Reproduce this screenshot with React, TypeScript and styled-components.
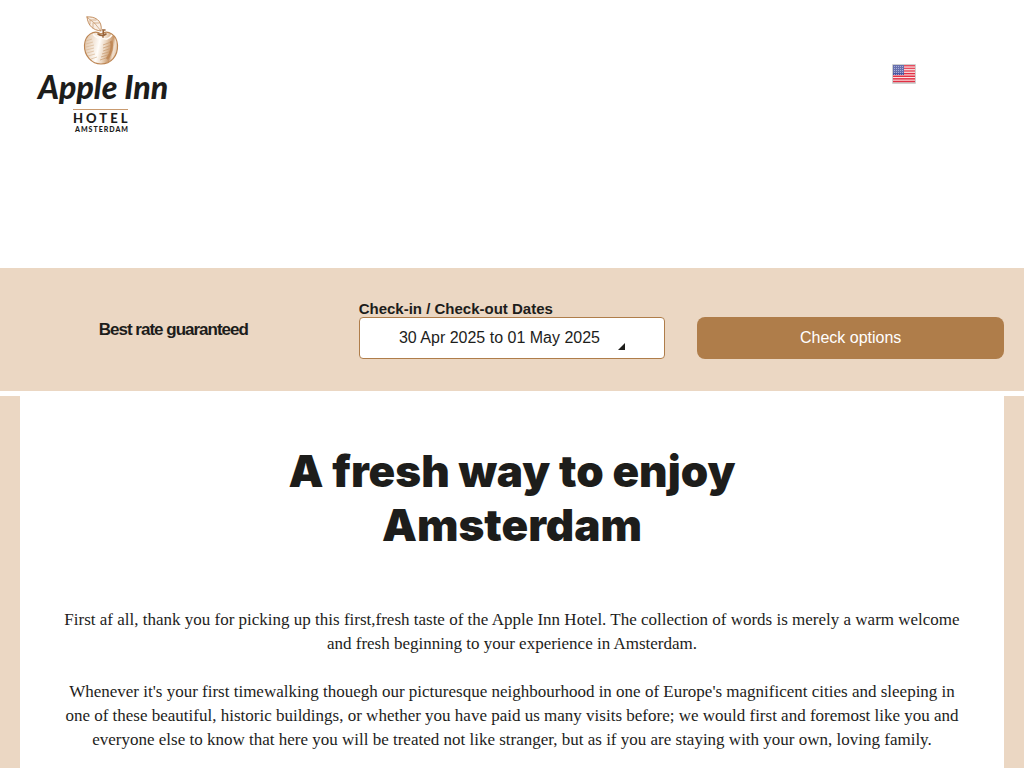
import React from "react";
import styled, { createGlobalStyle } from "styled-components";

const ink = "#1d1d1b";
const sand = "#ebd7c3";
const bronze = "#af7d4a";

const GlobalStyle = createGlobalStyle`
  * { box-sizing: border-box; }
  body {
    margin: 0;
    background: #fff;
    color: ${ink};
    font-family: "Liberation Sans", Arial, sans-serif;
    font-size: 16px;
  }
`;

const Header = styled.header`
  display: flex;
  justify-content: space-between;
  align-items: flex-start;
  min-height: 268px;
  padding: 12px 108px 0 32px;
`;

const HomeLink = styled.a`
  display: block;
  line-height: 0;
`;

const LanguageButton = styled.button`
  margin-top: 52px;
  padding: 0;
  border: 0;
  background: none;
  line-height: 0;
  cursor: pointer;
`;

const BookingBar = styled.form`
  display: grid;
  grid-template-columns: repeat(3, 1fr);
  column-gap: 32px;
  padding: 32px 20px;
  background: ${sand};
`;

const RateNote = styled.p`
  align-self: center;
  margin: 0;
  text-align: center;
  font-size: 17px;
  font-weight: 700;
  letter-spacing: -1px;
`;

const DateField = styled.div`
  display: flex;
  flex-direction: column;
`;

const DateLabel = styled.label`
  font-size: 15px;
  line-height: 17px;
  font-weight: 700;
`;

const Control = styled.button`
  height: 42px;
  font-family: inherit;
  font-size: 16px;
  cursor: pointer;
`;

const DateButton = styled(Control)`
  display: flex;
  justify-content: center;
  align-items: center;
  gap: 18px;
  border: 1px solid ${bronze};
  border-radius: 4px;
  background: #fff;
  color: ${ink};
`;

const Corner = styled.svg`
  margin-top: 16px;
`;

const SubmitButton = styled(Control)`
  align-self: end;
  border: 0;
  border-radius: 8px;
  background: ${bronze};
  color: #fff;
`;

const Intro = styled.main`
  margin-top: 5px;
  padding: 48px 36px 16px;
  border: solid ${sand};
  border-width: 0 20px;
  text-align: center;
`;

const Title = styled.h1`
  max-width: 600px;
  margin: 0 auto 56px;
  font-family: Inter, sans-serif;
  font-size: 44px;
  line-height: 54px;
  font-weight: 900;
`;

const Paragraph = styled.p`
  margin: 0;
  font-family: "Liberation Serif", "Times New Roman", serif;
  font-size: 17px;
  line-height: 24px;

  & + & { margin-top: 24px; }
`;

const Logo = () => (
  <svg width="140" height="124" viewBox="32 12 140 124" role="img" aria-label="Apple Inn Hotel Amsterdam">
    <defs>
      <clipPath id="fruit">
        <path d="M101 34C94 29 85 35 84.500 45C84 56 92 64 101 64C111 64 118 56 117.500 45C117 35 108 29 101 34Z" />
      </clipPath>
      <linearGradient id="shade" x1="0" x2="1" y1=".4" y2=".6">
        <stop offset="0" stopColor="#e2c8ae" />
        <stop offset=".25" stopColor="#f3e6d9" />
        <stop offset=".42" stopColor="#fffdfa" />
        <stop offset=".6" stopColor="#ecd8c3" />
        <stop offset=".8" stopColor="#c9986a" />
        <stop offset=".88" stopColor="#f0dfce" />
        <stop offset="1" stopColor="#e2c6aa" />
      </linearGradient>
    </defs>
    <g fill="none" stroke="#bd8654" strokeLinecap="round">
      <path d="M101 34C94 29 85 35 84.500 45C84 56 92 64 101 64C111 64 118 56 117.500 45C117 35 108 29 101 34Z" fill="url(#shade)" strokeWidth="1.200" />
      <g clipPath="url(#fruit)" strokeLinecap="butt">
        <path d="M86 41L92 39M86 44L93 42M86 47L94 45M86 50L94 48M87 53L94 51M88 56L95 54M91 59L97 57" stroke="#d9b795" strokeWidth=".7" />
        <path d="M103 45L111 42M103 48L112 45M103 51L112 48M102 54L112 51M101 57L111 54M100 60L109 57" stroke="#c79a6e" strokeWidth=".7" />
        <path d="M111 41Q114 49 107 59" stroke="#b97f4c" strokeWidth="2.500" opacity=".7" />
        <path d="M93 34Q98 40 101 37Q107 42 112 35" stroke="#fffaf5" strokeWidth="1.500" />
      </g>
      <path d="M98 34Q102 37 106 34M103 37Q104 33 103 30L105 30" stroke="#99643a" strokeWidth="1.600" />
      <path d="M87 17C94 16 103 20 101 31C93 30 88 26 87 17Z" fill="#f8eee4" strokeWidth=".9" />
      <path d="M88 18Q95 22 101 31M91 20L96 20M94 23L99 23M90 20L90 24M93 23L93 28" strokeWidth=".6" />
    </g>
    <text x="38" y="99" fill={ink} fontFamily="Lato, sans-serif" fontSize="32" fontWeight="900" fontStyle="italic">Apple Inn</text>
    <path d="M73 109.500H128" stroke="#c99b70" />
    <text x="73" y="123" fill={ink} fontFamily="Lato, sans-serif" fontSize="13" fontWeight="900" letterSpacing="3">HOTEL</text>
    <text x="75" y="132" fill={ink} fontFamily="Lato, sans-serif" fontSize="7" fontWeight="900" letterSpacing="1">AMSTERDAM</text>
  </svg>
);

const stripes = [0, 2, 4, 6, 8, 10, 12];
const stars = [0, 1, 2, 3, 4];

const Flag = () => (
  <svg width="24" height="20" viewBox="0 0 24 20" aria-hidden="true">
    <rect width="24" height="20" rx="1" fill="#cfcfcf" />
    <rect x="1" y="1" width="22" height="17" fill="#fae3e3" />
    {stripes.map((n) => (
      <rect key={n} x="1" y={1 + n * 1.31} width="22" height="1.500" fill="#e23044" />
    ))}
    <rect x="1" y="1" width="11" height="10" fill="#4d57a0" />
    {stars.map((r) =>
      stars.map((c) => (
        <rect key={`${r}-${c}`} x={2 + c * 2} y={2 + r * 2} width="1" height="1" fill="#9aa1d0" />
      ))
    )}
    <rect x="1" y="1" width="22" height="8" fill="#fff" opacity=".15" />
  </svg>
);

export default function App() {
  return (
    <>
      <GlobalStyle />
      <Header>
        <HomeLink href="#home">
          <Logo />
        </HomeLink>
        <LanguageButton type="button" aria-label="Language: English">
          <Flag />
        </LanguageButton>
      </Header>
      <BookingBar onSubmit={(event) => event.preventDefault()}>
        <RateNote>Best rate guaranteed</RateNote>
        <DateField>
          <DateLabel htmlFor="dates">Check-in / Check-out Dates</DateLabel>
          <DateButton id="dates" type="button">
            30 Apr 2025 to 01 May 2025
            <Corner width="7" height="7" viewBox="0 0 7 7" aria-hidden="true">
              <path d="M7 0V7H0Z" fill={ink} />
            </Corner>
          </DateButton>
        </DateField>
        <SubmitButton type="submit">Check options</SubmitButton>
      </BookingBar>
      <Intro>
        <Title>A fresh way to enjoy Amsterdam</Title>
        <Paragraph>
          First af all, thank you for picking up this first,fresh taste of the Apple Inn Hotel. The
          collection of words is merely a warm welcome and fresh beginning to your experience in
          Amsterdam.
        </Paragraph>
        <Paragraph>
          Whenever it's your first timewalking thouegh our picturesque neighbourhood in one of
          Europe's magnificent cities and sleeping in one of these beautiful, historic buildings, or
          whether you have paid us many visits before; we would first and foremost like you and
          everyone else to know that here you will be treated not like stranger, but as if you are
          staying with your own, loving family.
        </Paragraph>
      </Intro>
    </>
  );
}
